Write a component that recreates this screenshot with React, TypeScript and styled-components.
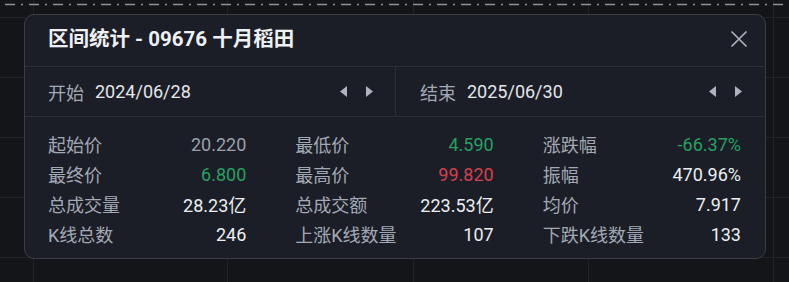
import React from 'react';
import styled, { createGlobalStyle } from 'styled-components';

interface Stat {
  label: string;
  value: string;
  tone?: 'up' | 'down' | 'muted';
}

const stats: Stat[] = [
  { label: '起始价', value: '20.220', tone: 'muted' },
  { label: '最低价', value: '4.590', tone: 'down' },
  { label: '涨跌幅', value: '-66.37%', tone: 'down' },
  { label: '最终价', value: '6.800', tone: 'down' },
  { label: '最高价', value: '99.820', tone: 'up' },
  { label: '振幅', value: '470.96%' },
  { label: '总成交量', value: '28.23亿' },
  { label: '总成交额', value: '223.53亿' },
  { label: '均价', value: '7.917' },
  { label: 'K线总数', value: '246' },
  { label: '上涨K线数量', value: '107' },
  { label: '下跌K线数量', value: '133' },
];

const gridX = [33, 227, 413, 588, 773];
const gridY = [17, 77, 137, 197, 257];

const GlobalStyle = createGlobalStyle`
  html, body {
    margin: 0;
    padding: 0;
    background: #131519;
  }
  body {
    font-family: Roboto, "Noto Sans CJK SC", sans-serif;
  }
`;

const Stage = styled.div`
  position: relative;
  width: 789px;
  height: 282px;
  overflow: hidden;
  background: #131519;
`;

const ChartGrid = styled.svg`
  position: absolute;
  inset: 0;
`;

const Panel = styled.div`
  position: absolute;
  left: 24px;
  top: 14px;
  width: 742px;
  height: 245px;
  box-sizing: border-box;
  background: #1b1e26;
  border: 1px solid #3b3e45;
  border-radius: 10px;
  display: flex;
  flex-direction: column;
`;

const Header = styled.div`
  height: 52px;
  box-sizing: border-box;
  display: flex;
  align-items: center;
  justify-content: space-between;
  padding: 0 15px 3px 23px;
  border-bottom: 1px solid #2a2e37;
`;

const Title = styled.h2`
  margin: 0;
  font-size: 20.5px;
  line-height: 24px;
  font-weight: 700;
  color: #eef0f3;
`;

const CloseButton = styled.button`
  width: 22px;
  height: 22px;
  padding: 0;
  border: none;
  background: none;
  display: flex;
  align-items: center;
  justify-content: center;
  cursor: pointer;
`;

const DateRow = styled.div`
  height: 49px;
  display: grid;
  grid-template-columns: 371px 1fr;
  border-bottom: 1px solid #2a2e37;
`;

const DateCell = styled.div<{ $first?: boolean }>`
  display: flex;
  align-items: center;
  padding: 0 ${({ $first }) => ($first ? '22px 0 23px' : '23px 0 24px')};
  border-right: ${({ $first }) => ($first ? '1px solid #2a2e37' : 'none')};
`;

const DateLabel = styled.span`
  font-size: 18px;
  color: #a3a9b4;
  margin-right: 11px;
`;

const DateValue = styled.span`
  font-size: 18px;
  color: #e4e6ea;
  flex: 1;
`;

const Arrows = styled.div`
  display: flex;
  gap: 19px;
  align-items: center;
`;

const Stats = styled.div`
  display: grid;
  grid-template-columns: repeat(3, 1fr);
  column-gap: 49px;
  padding: 12px 24px 0 23px;
`;

const StatCell = styled.div`
  height: 30px;
  display: flex;
  align-items: center;
  justify-content: space-between;
  font-size: 18px;
`;

const StatLabel = styled.span`
  color: #a3a9b4;
`;

const toneColor = { up: '#d6404e', down: '#27a062', muted: '#9ba1ab' };

const StatValue = styled.span<{ $tone?: Stat['tone'] }>`
  color: ${({ $tone }) => ($tone ? toneColor[$tone] : '#eceef1')};
`;

const Triangle: React.FC<{ dir: 'left' | 'right' }> = ({ dir }) => (
  <svg width="7" height="11" viewBox="0 0 7 11">
    {dir === 'left' ? (
      <polygon points="7,0 7,11 0,5.5" fill="#aeb4be" />
    ) : (
      <polygon points="0,0 0,11 7,5.5" fill="#aeb4be" />
    )}
  </svg>
);

const DateSide: React.FC<{ label: string; date: string; first?: boolean }> = ({ label, date, first }) => (
  <DateCell $first={first}>
    <DateLabel>{label}</DateLabel>
    <DateValue>{date}</DateValue>
    <Arrows>
      <Triangle dir="left" />
      <Triangle dir="right" />
    </Arrows>
  </DateCell>
);

const App: React.FC = () => (
  <Stage>
    <GlobalStyle />
    <ChartGrid width="789" height="282">
      {gridX.map((x) => (
        <line key={`x${x}`} x1={x + 0.5} y1="0" x2={x + 0.5} y2="282" stroke="#1f2228" strokeWidth="1" />
      ))}
      {gridY.map((y) => (
        <line key={`y${y}`} x1="0" y1={y + 0.5} x2="789" y2={y + 0.5} stroke="#1f2228" strokeWidth="1" />
      ))}
      <line x1="5" y1="4.5" x2="789" y2="4.5" stroke="#8c919b" strokeWidth="1.5" strokeDasharray="10 6 2 6" />
    </ChartGrid>
    <Panel>
      <Header>
        <Title>区间统计 - 09676 十月稻田</Title>
        <CloseButton aria-label="关闭">
          <svg width="18" height="18" viewBox="0 0 18 18">
            <path d="M1.5 1.5 L16.5 16.5 M16.5 1.5 L1.5 16.5" stroke="#b0b5be" strokeWidth="1.6" />
          </svg>
        </CloseButton>
      </Header>
      <DateRow>
        <DateSide label="开始" date="2024/06/28" first />
        <DateSide label="结束" date="2025/06/30" />
      </DateRow>
      <Stats>
        {stats.map((s) => (
          <StatCell key={s.label}>
            <StatLabel>{s.label}</StatLabel>
            <StatValue $tone={s.tone}>{s.value}</StatValue>
          </StatCell>
        ))}
      </Stats>
    </Panel>
  </Stage>
);

export default App;
